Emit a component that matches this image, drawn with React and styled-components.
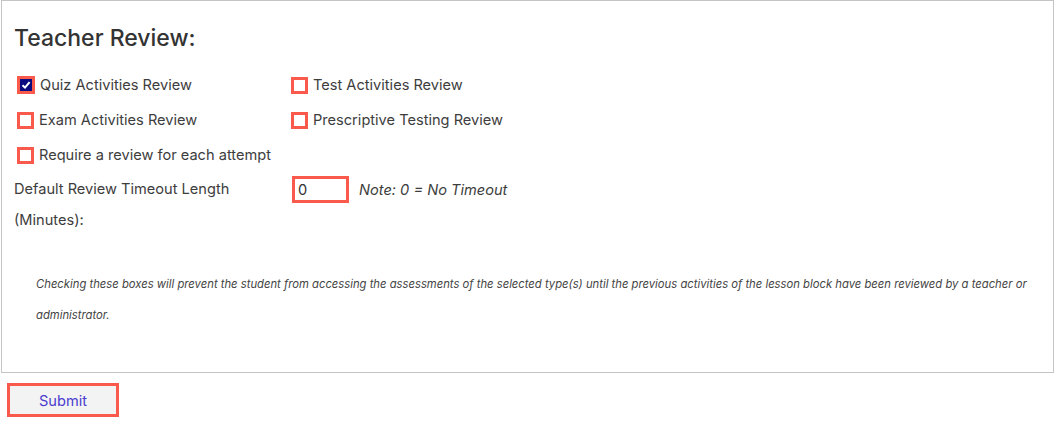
import React, { useState } from 'react';
import styled, { createGlobalStyle } from 'styled-components';

const GlobalStyle = createGlobalStyle`
  body {
    margin: 0;
    background: #fff;
    font-family: Inter, "Noto Sans", sans-serif;
    color: #3d3d3d;
  }
`;

const Page = styled.div`
  padding-left: 1px;
`;

const Panel = styled.div`
  box-sizing: border-box;
  width: 1053px;
  height: 373px;
  border: 1px solid #c4c4c4;
  padding: 23px 12px 0;
`;

const Title = styled.h2`
  margin: 0 0 14px;
  font-size: 23px;
  line-height: 29px;
  font-weight: 500;
  color: #333;
`;

const Grid = styled.div`
  display: grid;
  grid-template-columns: 277px 1fr;
  grid-auto-rows: 35px;
`;

const Cell = styled.label`
  display: flex;
  align-items: center;
  gap: 5px;
  padding-left: ${(p) => (p.$first ? '3px' : '0')};
  padding-top: 1px;
  font-size: 14.6px;
  cursor: pointer;
`;

const Box = styled.span`
  box-sizing: border-box;
  width: ${(p) => (p.$checked ? '18px' : '17px')};
  height: ${(p) => (p.$checked ? '18px' : '17px')};
  border: 3px solid #fa5a4b;
  background: ${(p) => (p.$checked ? '#0a0a80' : '#fff')};
  display: flex;
  align-items: center;
  justify-content: center;
`;

const TimeoutRow = styled.div`
  display: grid;
  grid-template-columns: 278px 1fr;
  margin-top: 2px;
`;

const TimeoutLabel = styled.div`
  font-size: 14.6px;
  line-height: 31px;
  width: 260px;
`;

const TimeoutField = styled.div`
  display: flex;
  align-items: center;
  gap: 10px;
  height: 31px;
`;

const NumberInput = styled.input`
  box-sizing: border-box;
  width: 57px;
  height: 27px;
  border: 3px solid #fa5a4b;
  padding: 0 3px;
  font-family: inherit;
  font-size: 14.6px;
  color: #333;
  outline: none;
`;

const Hint = styled.span`
  font-size: 14.6px;
  font-style: italic;
`;

const Note = styled.p`
  margin: 33px 0 0;
  padding-left: 22px;
  font-size: 11.28px;
  line-height: 31px;
  font-style: italic;
  color: #444;
`;

const SubmitButton = styled.button`
  box-sizing: border-box;
  margin: 10px 0 0 6px;
  width: 112px;
  height: 34px;
  border: 3px solid #fa5a4b;
  background: #f3f3f3;
  color: #4b3ccf;
  font-family: inherit;
  font-size: 14.6px;
  padding-top: 3px;
  cursor: pointer;
`;

const Check = () => (
  <svg width="10" height="10" viewBox="0 0 10 10">
    <path d="M1.5 5.2 L4 7.6 L8.6 2.2" fill="none" stroke="#fff" strokeWidth="2" />
  </svg>
);

const Option = ({ label, checked, first, onToggle }) => (
  <Cell $first={first} onClick={onToggle}>
    <Box $checked={checked}>{checked && <Check />}</Box>
    {label}
  </Cell>
);

const options = [
  ['quiz', 'Quiz Activities Review'],
  ['test', 'Test Activities Review'],
  ['exam', 'Exam Activities Review'],
  ['prescriptive', 'Prescriptive Testing Review'],
  ['attempt', 'Require a review for each attempt'],
];

const App = () => {
  const [state, setState] = useState({ quiz: true });
  const [timeout, setTimeoutValue] = useState('0');

  return (
    <Page>
      <GlobalStyle />
      <Panel>
        <Title>Teacher Review:</Title>
        <Grid>
          {options.map(([key, label], i) => (
            <Option
              key={key}
              label={label}
              first={i % 2 === 0}
              checked={!!state[key]}
              onToggle={() => setState((s) => ({ ...s, [key]: !s[key] }))}
            />
          ))}
        </Grid>
        <TimeoutRow>
          <TimeoutLabel>Default Review Timeout Length (Minutes):</TimeoutLabel>
          <TimeoutField>
            <NumberInput value={timeout} onChange={(e) => setTimeoutValue(e.target.value)} />
            <Hint>Note: 0 = No Timeout</Hint>
          </TimeoutField>
        </TimeoutRow>
        <Note>
          Checking these boxes will prevent the student from accessing the assessments of the selected
          type(s) until the previous activities of the lesson block have been reviewed by a teacher or
          administrator.
        </Note>
      </Panel>
      <SubmitButton>Submit</SubmitButton>
    </Page>
  );
};

export default App;
